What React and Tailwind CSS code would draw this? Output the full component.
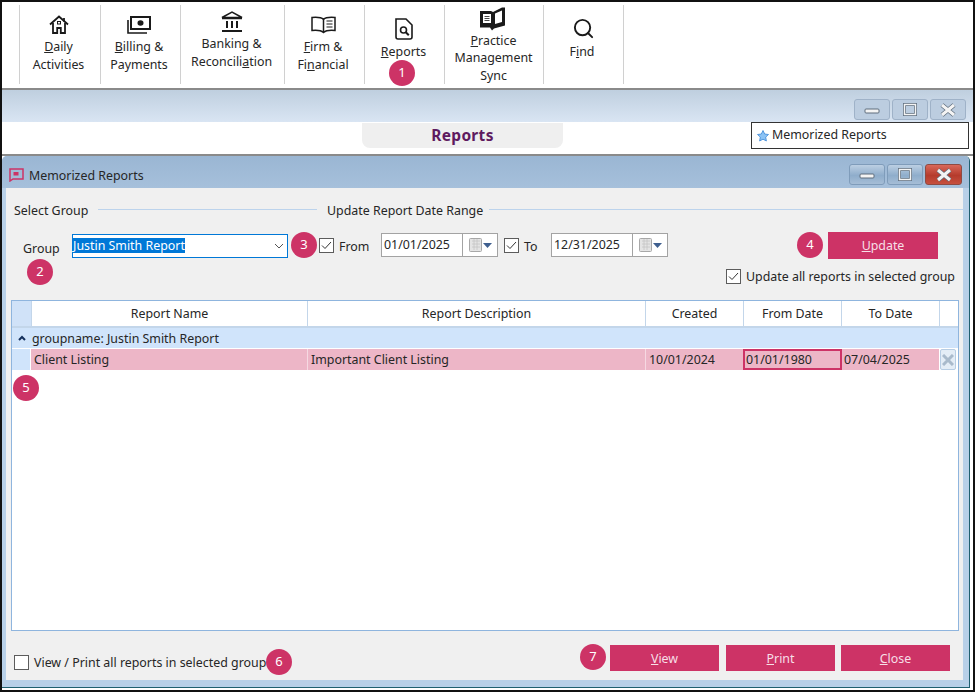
import { Search } from "lucide-react";

const font = "font-['Noto_Sans',sans-serif]";

function Badge({ n, x, y }) {
  return (
    <div
      className="absolute flex h-[26px] w-[26px] items-center justify-center rounded-full bg-[#cd3366] text-[13px] text-white"
      style={{ left: x - 13, top: y - 13 }}
    >
      {n}
    </div>
  );
}

function ToolItem({ x, w, icon, lines }) {
  return (
    <div className="absolute top-0 h-[88px] text-center text-[12.4px] leading-[17.5px] text-[#262626]" style={{ left: x, width: w }}>
      {icon}
      {lines.map((l, i) => (
        <div key={i} className="absolute left-0 right-0 whitespace-nowrap" style={{ top: l.y - 8.5 }}>
          {l.t}
        </div>
      ))}
    </div>
  );
}

function HomeIcon() {
  return (
    <svg className="absolute left-[30px] top-[15px]" width="20" height="19" viewBox="0 0 20 19" fill="none" stroke="#1a1a1a" strokeWidth="1.800">
      <path d="M1 9.500 10 1.500l9 8" />
      <path d="M15 3v3.500" />
      <path d="M4 8v10h4.200v-5h3.600v5H16V8" />
      <rect x="8.500" y="6.500" width="3" height="2.500" strokeWidth="1" />
    </svg>
  );
}

function MoneyIcon() {
  return (
    <svg className="absolute left-[27px] top-[16px]" width="24" height="18" viewBox="0 0 24 18" fill="none" stroke="#1a1a1a">
      <rect x="4" y="1" width="19" height="12" strokeWidth="2" />
      <path d="M1 4v13h19" strokeWidth="1.600" />
      <ellipse cx="13.500" cy="7" rx="3" ry="2.800" fill="#1a1a1a" stroke="none" />
    </svg>
  );
}

function BankIcon() {
  return (
    <svg className="absolute left-[41px] top-[11px]" width="22" height="21" viewBox="0 0 22 21" fill="none" stroke="#1a1a1a">
      <path d="M1 6.500 11 1.200l10 5.300Z" strokeWidth="1.500" />
      <path d="M1 7.500h20" strokeWidth="1.500" />
      <path d="M6 10v7M11 10v7M16 10v7" strokeWidth="2" />
      <path d="M1 20h20" strokeWidth="2" />
    </svg>
  );
}

function BookIcon() {
  return (
    <svg className="absolute left-[27px] top-[16px]" width="25" height="18" viewBox="0 0 25 18" fill="none" stroke="#1a1a1a" strokeWidth="1.500">
      <path d="M12.500 3.500C10.500 1.500 6.500 1 1 1.500v13c5-.5 9-.2 11.500 2 2.500-2.200 6.500-2.500 11.500-2v-13C18.500 1 14.500 1.500 12.500 3.500Z" />
      <path d="M12.500 3.500v13" />
      <path d="M15.500 5h6M15.500 8h6M15.500 11h6" strokeWidth="1" />
    </svg>
  );
}

function ReportIcon() {
  return (
    <svg className="absolute left-[31px] top-[18px]" width="18" height="22" viewBox="0 0 18 22" fill="none" stroke="#1a1a1a">
      <path d="M1 1h10l6 6v12q0 2-2 2H3q-2 0-2-2Z" strokeWidth="1.600" />
      <circle cx="8.500" cy="12" r="3" strokeWidth="1.600" />
      <path d="m10.800 14.300 3 3" strokeWidth="2" />
    </svg>
  );
}

function SyncLogo() {
  return (
    <svg className="absolute left-[36px] top-[7px]" width="26" height="24" viewBox="0 0 26 24">
      <path d="M0 4h11l2 1 9-4.500h3v18l-11 3-2 2-2-3H0Z" fill="#1a1a1a" />
      <path d="M3 7h8v9H3ZM15 6.500l7-3V15l-7 2Z" fill="#fff" />
      <path d="M4.500 9.500h5M4.500 11.500h5M4.500 13.500h5" stroke="#1a1a1a" strokeWidth="0.800" />
    </svg>
  );
}

function WinBtn({ x, y, w, red, kind, flat }) {
  const stroke = "#f4f4f4";
  return (
    <div
      className={`absolute flex h-[21px] items-center justify-center rounded-[3px] border ${
        red
          ? "border-[#8f4a42] bg-[linear-gradient(#d9685a,#b53b2c_55%,#c6503f)]"
          : flat
          ? "border-[#9fb2c8] bg-[#bccde0]"
          : "border-[#7f9cba] bg-[linear-gradient(#bccfe3,#8fadcb_55%,#a5bdd6)]"
      }`}
      style={{ left: x, top: y, width: w }}
    >
      <svg width="18" height="14" viewBox="0 0 18 14" fill="none">
        {kind === "min" && <rect x="2" y="6" width="14" height="4" rx="1" fill={stroke} stroke="#5e6d7d" />}
        {kind === "max" && (
          <>
            <rect x="3.500" y="1.500" width="11" height="10" fill="none" stroke="#5e6d7d" strokeWidth="3" />
            <rect x="3.500" y="1.500" width="11" height="10" fill="none" stroke={stroke} strokeWidth="1.500" />
          </>
        )}
        {kind === "close" && (
          <>
            <path d="M3 2l12 10M15 2 3 12" stroke="#5e6d7d" strokeWidth="4.500" />
            <path d="M3 2l12 10M15 2 3 12" stroke={stroke} strokeWidth="3" />
          </>
        )}
      </svg>
    </div>
  );
}

function Check({ x, y, on }) {
  return (
    <div
      className="absolute flex h-[15px] w-[15px] items-center justify-center border border-[#5c5c5c] bg-white"
      style={{ left: x, top: y }}
    >
      {on && (
        <svg width="11" height="9" viewBox="0 0 11 9" fill="none" stroke="#333" strokeWidth="1">
          <path d="M1 4.500 4 7.500 10 1" />
        </svg>
      )}
    </div>
  );
}

function DateBox({ x, value }) {
  return (
    <div className="absolute flex h-[24px] w-[117px] border border-[#a3a3a3] bg-white" style={{ left: x, top: 233 }}>
      <div className="w-[81px] border-r border-[#a3a3a3] pl-[2px] text-[12.4px] leading-[22px] text-[#262626]">{value}</div>
      <div className="flex flex-1 items-center pl-[6px]">
        <svg width="28" height="16" viewBox="0 0 28 16">
          <rect x="0.500" y="1.500" width="12" height="13" rx="1" fill="#e4e4e4" stroke="#a8a8a8" />
          <path d="M3 4h8M3 7h8M3 10h8M5 2v11M8 2v11" stroke="#c4c4c4" strokeWidth="0.800" />
          <path d="M14 6h9l-4.500 5Z" fill="#3f5f8f" />
        </svg>
      </div>
    </div>
  );
}

function Cell({ x, w, children, className = "" }) {
  return (
    <div className={`absolute top-0 bottom-0 whitespace-nowrap ${className}`} style={{ left: x, width: w }}>
      {children}
    </div>
  );
}

function PinkBtn({ x, y, w, h, hot, rest }) {
  return (
    <div
      className="absolute flex items-center justify-center bg-[#cd3366] pt-[2px] text-[12.4px] text-[#f7dfe7]"
      style={{ left: x, top: y, width: w, height: h }}
    >
      <span>
        <u>{hot}</u>
        {rest}
      </span>
    </div>
  );
}

export default function App() {
  const seps = [19, 100, 180, 284, 364, 444, 543, 623];
  return (
    <div className={`relative h-[692px] w-[975px] overflow-hidden bg-white text-[12.4px] text-[#262626] ${font}`}>
      {/* ribbon */}
      {seps.map((x) => (
        <div key={x} className="absolute top-[5px] h-[79px] w-px bg-[#d0d0d0]" style={{ left: x }} />
      ))}
      <ToolItem x={19} w={79} icon={<HomeIcon />} lines={[{ t: <><u>D</u>aily</>, y: 46 }, { t: "Activities", y: 64 }]} />
      <ToolItem x={100} w={78} icon={<MoneyIcon />} lines={[{ t: <><u>B</u>illing &amp;</>, y: 46 }, { t: "Payments", y: 64 }]} />
      <ToolItem x={180} w={103} icon={<BankIcon />} lines={[{ t: "Banking &", y: 43 }, { t: <>Reconcili<u>a</u>tion</>, y: 61 }]} />
      <ToolItem x={284} w={78} icon={<BookIcon />} lines={[{ t: <><u>F</u>irm &amp;</>, y: 46 }, { t: <>Fi<u>n</u>ancial</>, y: 64 }]} />
      <ToolItem x={364} w={79} icon={<ReportIcon />} lines={[{ t: <><u>R</u>eports</>, y: 51 }]} />
      <ToolItem x={444} w={99} icon={<SyncLogo />} lines={[{ t: <><u>P</u>ractice</>, y: 40 }, { t: "Management", y: 57 }, { t: "Sync", y: 75 }]} />
      <ToolItem x={543} w={78} icon={<Search className="absolute left-[29px] top-[17px] h-[23px] w-[23px] text-[#1a1a1a]" strokeWidth={2} />} lines={[{ t: <>F<u>i</u>nd</>, y: 51 }]} />
      <Badge n="1" x={402} y={73} />

      {/* outer mdi strip */}
      <div className="absolute left-0 right-0 top-[88px] h-[2px] bg-[#8a8a8a]" />
      <div className="absolute left-0 right-0 top-[90px] h-[32px] bg-[linear-gradient(#bfcfdf,#d9e5f3)]" />
      <WinBtn x={854} y={99} w={36} kind="min" flat />
      <WinBtn x={892} y={99} w={36} kind="max" flat />
      <WinBtn x={930} y={99} w={36} kind="close" flat />

      <div className="absolute left-[362px] top-[123px] flex h-[25px] w-[201px] items-center justify-center rounded-b-[8px] bg-[#efefef] text-[15.5px] font-bold tracking-[0.3px] text-[#5f1a5f]">
        Reports
      </div>
      <div className="absolute left-[751px] top-[122px] flex h-[27px] w-[218px] items-center gap-[3px] border border-[#333] bg-white pl-[5px]">
        <svg width="12" height="12" viewBox="0 0 12 12">
          <path d="M6 .5 7.700 4l3.800.500-2.800 2.600.7 3.900L6 9.200 2.600 11l.7-3.900L.5 4.500 4.300 4Z" fill="#8cc3f5" stroke="#3b86d6" strokeWidth="0.800" />
        </svg>
        <span>Memorized Reports</span>
      </div>
      <div className="absolute left-0 right-0 top-[154px] h-[2px] bg-[#8a8a8a]" />

      {/* memorized reports window */}
      <div className="absolute left-[2px] top-[156px] h-[532px] w-[968px] rounded-t-[5px] border-b border-r border-[#1f5f6f] bg-[#b8d0e8]">
        <div className="h-[32px] rounded-t-[5px] bg-[linear-gradient(#9ab6d3,#a6c0db)]" />
      </div>
      <svg className="absolute left-[9px] top-[167px]" width="15" height="15" viewBox="0 0 15 15" fill="none" stroke="#cd3366">
        <path d="M1 2h13v10H4l-3 2Z" strokeWidth="1.500" />
        <rect x="4.500" y="5" width="5" height="3.500" fill="#cd3366" stroke="none" />
      </svg>
      <div className="absolute left-[29px] top-[167px] leading-[18px]">Memorized Reports</div>
      <WinBtn x={849} y={164} w={36} kind="min" />
      <WinBtn x={887} y={164} w={36} kind="max" />
      <WinBtn x={925} y={164} w={37} kind="close" red />

      {/* client area */}
      <div className="absolute left-[6px] top-[188px] h-[492px] w-[957px] bg-[#f0f0f0]" />

      <div className="absolute left-[14px] top-[202px] leading-[18px]">Select Group</div>
      <div className="absolute left-[98px] top-[209px] h-[1px] w-[219px] bg-[#bcd3ec]" />
      <div className="absolute left-[327px] top-[202px] leading-[18px]">Update Report Date Range</div>
      <div className="absolute left-[489px] top-[209px] h-[1px] w-[474px] bg-[#bcd3ec]" />

      <div className="absolute left-[23px] top-[240px] leading-[18px]">Group</div>
      <div className="absolute left-[72px] top-[234px] flex h-[24px] w-[216px] items-center border border-[#0078d7] bg-white pb-[2px]">
        <span className="bg-[#0078d7] leading-[15px] text-white">Justin Smith Report</span>
        <svg className="absolute right-[3px] top-[8px]" width="10" height="6" viewBox="0 0 10 6" fill="none" stroke="#555">
          <path d="M1 1l4 4 4-4" />
        </svg>
      </div>
      <Badge n="2" x={40} y={272} />
      <Badge n="3" x={304} y={245} />

      <Check x={319} y={238} on />
      <div className="absolute left-[339px] top-[238px] leading-[18px]">From</div>
      <DateBox x={381} value="01/01/2025" />
      <Check x={504} y={238} on />
      <div className="absolute left-[524px] top-[238px] leading-[18px]">To</div>
      <DateBox x={551} value="12/31/2025" />

      <Badge n="4" x={810} y={245} />
      <PinkBtn x={828} y={232} w={110} h={27} hot="U" rest="pdate" />
      <Check x={726} y={269} on />
      <div className="absolute left-[746px] top-[268px] leading-[18px]">Update all reports in selected group</div>

      {/* grid */}
      <div className="absolute left-[11px] top-[300px] h-[331px] w-[948px] border border-[#8fb5de] bg-white" />
      <div className="absolute left-[12px] top-[301px] h-[27px] w-[946px] border-b-2 border-[#c3d6ea] text-center leading-[25px]">
        <Cell x={0} w={19} className="bg-[#d0e2f8]" />
        <Cell x={19} w={277} className="border-x border-[#c3d6ea]">Report Name</Cell>
        <Cell x={296} w={338} className="border-r border-[#c3d6ea]">Report Description</Cell>
        <Cell x={634} w={98} className="border-r border-[#c3d6ea]">Created</Cell>
        <Cell x={732} w={98} className="border-r border-[#c3d6ea]">From Date</Cell>
        <Cell x={830} w={98} className="border-r border-[#c3d6ea]">To Date</Cell>
      </div>
      <div className="absolute left-[12px] top-[328px] h-[20px] w-[946px] bg-[#d0e4fb] leading-[21px]">
        <svg className="absolute left-[6px] top-[7px]" width="8" height="6" viewBox="0 0 8 6" fill="none" stroke="#14305c" strokeWidth="2">
          <path d="M1 5l3-3 3 3" />
        </svg>
        <span className="absolute left-[20px]">groupname: Justin Smith Report</span>
      </div>
      <div className="absolute left-[12px] top-[349px] h-[21px] w-[18px] bg-[#d0e4fb]" />
      <div className="absolute left-[31px] top-[349px] h-[21px] w-[908px] bg-[#edb6c7] leading-[21px]">
        <Cell x={3} w={270}>Client Listing</Cell>
        <div className="absolute bottom-0 left-[276px] top-0 w-px bg-[#f6d9e2]" />
        <Cell x={280} w={330}>Important Client Listing</Cell>
        <div className="absolute bottom-0 left-[614px] top-0 w-px bg-[#f6d9e2]" />
        <Cell x={618} w={90}>10/01/2024</Cell>
        <Cell x={712} w={99} className="border-2 border-[#cd3366] pl-[1px] leading-[17px]">01/01/1980</Cell>
        <Cell x={813} w={90}>07/04/2025</Cell>
      </div>
      <div className="absolute left-[940px] top-[349px] flex h-[21px] w-[16px] items-center justify-center rounded-[2px] border border-[#b7cde4] bg-[#e4edf6]">
        <svg width="12" height="12" viewBox="0 0 12 12" fill="none" stroke="#a9bacb" strokeWidth="3">
          <path d="M1 1l10 10M11 1 1 11" />
        </svg>
      </div>
      <Badge n="5" x={26} y={388} />

      {/* footer */}
      <Check x={14} y={655} />
      <div className="absolute left-[34px] top-[654px] leading-[18px]">View / Print all reports in selected group</div>
      <Badge n="6" x={279} y={662} />
      <Badge n="7" x={593} y={657} />
      <PinkBtn x={610} y={645} w={109} h={26} hot="V" rest="iew" />
      <PinkBtn x={726} y={645} w={109} h={26} hot="P" rest="rint" />
      <PinkBtn x={841} y={645} w={109} h={26} hot="C" rest="lose" />

      {/* screenshot frame */}
      <div className="pointer-events-none absolute inset-0 border-2 border-[#111]" />
    </div>
  );
}
